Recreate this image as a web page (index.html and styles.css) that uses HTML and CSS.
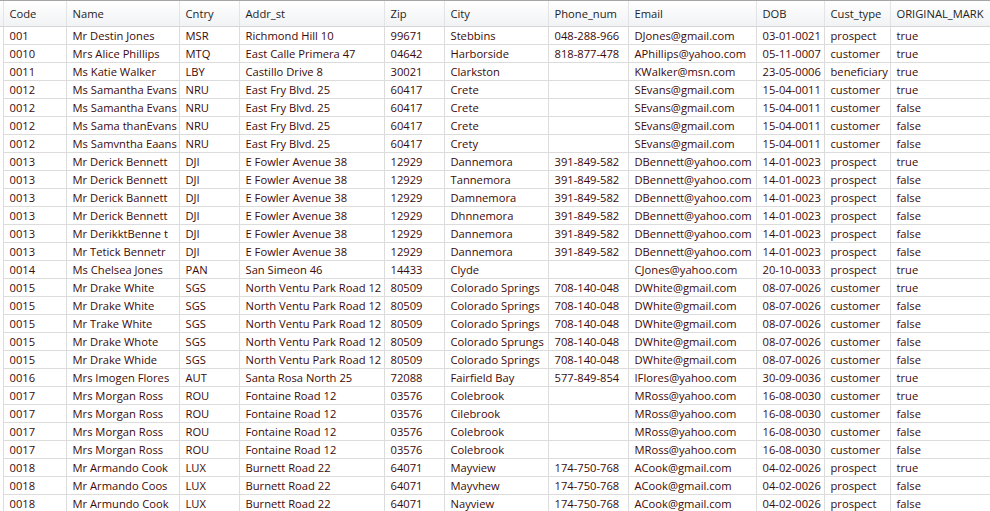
FILE: index.html
```html
<!DOCTYPE html>
<html>
<head>
<meta charset="utf-8">
<link rel="stylesheet" href="styles.css">
</head>
<body>
<div class="grid">
<table class="tbl">
<colgroup>
<col class="c-gut"><col class="c-code"><col class="c-name"><col class="c-cntry"><col class="c-addr"><col class="c-zip"><col class="c-city"><col class="c-phone"><col class="c-email"><col class="c-dob"><col class="c-type"><col class="c-mark">
</colgroup>
<thead>
<tr><th class="gut"></th><th>Code</th><th>Name</th><th>Cntry</th><th>Addr_st</th><th>Zip</th><th>City</th><th>Phone_num</th><th>Email</th><th>DOB</th><th>Cust_type</th><th>ORIGINAL_MARK</th></tr>
</thead>
<tbody>
<tr><td class="gut"></td><td>001</td><td>Mr Destin Jones</td><td>MSR</td><td>Richmond Hill 10</td><td>99671</td><td>Stebbins</td><td>048-288-966</td><td>DJones@gmail.com</td><td>03-01-0021</td><td>prospect</td><td>true</td></tr>
<tr><td class="gut"></td><td>0010</td><td>Mrs Alice Phillips</td><td>MTQ</td><td>East Calle Primera 47</td><td>04642</td><td>Harborside</td><td>818-877-478</td><td>APhillips@yahoo.com</td><td>05-11-0007</td><td>customer</td><td>true</td></tr>
<tr><td class="gut"></td><td>0011</td><td>Ms Katie Walker</td><td>LBY</td><td>Castillo Drive 8</td><td>30021</td><td>Clarkston</td><td></td><td>KWalker@msn.com</td><td>23-05-0006</td><td>beneficiary</td><td>true</td></tr>
<tr><td class="gut"></td><td>0012</td><td>Ms Samantha Evans</td><td>NRU</td><td>East Fry Blvd. 25</td><td>60417</td><td>Crete</td><td></td><td>SEvans@gmail.com</td><td>15-04-0011</td><td>customer</td><td>true</td></tr>
<tr><td class="gut"></td><td>0012</td><td>Ms Samantha Evans</td><td>NRU</td><td>East Fry Blvd. 25</td><td>60417</td><td>Crete</td><td></td><td>SEvans@gmail.com</td><td>15-04-0011</td><td>customer</td><td>false</td></tr>
<tr><td class="gut"></td><td>0012</td><td>Ms Sama thanEvans</td><td>NRU</td><td>East Fry Blvd. 25</td><td>60417</td><td>Crete</td><td></td><td>SEvans@gmail.com</td><td>15-04-0011</td><td>customer</td><td>false</td></tr>
<tr><td class="gut"></td><td>0012</td><td>Ms Samvntha Eaans</td><td>NRU</td><td>East Fry Blvd. 25</td><td>60417</td><td>Crety</td><td></td><td>SEvans@gmail.com</td><td>15-04-0011</td><td>customer</td><td>false</td></tr>
<tr><td class="gut"></td><td>0013</td><td>Mr Derick Bennett</td><td>DJI</td><td>E Fowler Avenue 38</td><td>12929</td><td>Dannemora</td><td>391-849-582</td><td>DBennett@yahoo.com</td><td>14-01-0023</td><td>prospect</td><td>true</td></tr>
<tr><td class="gut"></td><td>0013</td><td>Mr Derick Bennett</td><td>DJI</td><td>E Fowler Avenue 38</td><td>12929</td><td>Tannemora</td><td>391-849-582</td><td>DBennett@yahoo.com</td><td>14-01-0023</td><td>prospect</td><td>false</td></tr>
<tr><td class="gut"></td><td>0013</td><td>Mr Derick Bannett</td><td>DJI</td><td>E Fowler Avenue 38</td><td>12929</td><td>Damnemora</td><td>391-849-582</td><td>DBennett@yahoo.com</td><td>14-01-0023</td><td>prospect</td><td>false</td></tr>
<tr><td class="gut"></td><td>0013</td><td>Mr Derick Bennett</td><td>DJI</td><td>E Fowler Avenue 38</td><td>12929</td><td>Dhnnemora</td><td>391-849-582</td><td>DBennett@yahoo.com</td><td>14-01-0023</td><td>prospect</td><td>false</td></tr>
<tr><td class="gut"></td><td>0013</td><td>Mr DerikktBenne t</td><td>DJI</td><td>E Fowler Avenue 38</td><td>12929</td><td>Dannemora</td><td>391-849-582</td><td>DBennett@yahoo.com</td><td>14-01-0023</td><td>prospect</td><td>false</td></tr>
<tr><td class="gut"></td><td>0013</td><td>Mr Tetick Bennetr</td><td>DJI</td><td>E Fowler Avenue 38</td><td>12929</td><td>Dannemora</td><td>391-849-582</td><td>DBennett@yahoo.com</td><td>14-01-0023</td><td>prospect</td><td>false</td></tr>
<tr><td class="gut"></td><td>0014</td><td>Ms Chelsea Jones</td><td>PAN</td><td>San Simeon 46</td><td>14433</td><td>Clyde</td><td></td><td>CJones@yahoo.com</td><td>20-10-0033</td><td>prospect</td><td>true</td></tr>
<tr><td class="gut"></td><td>0015</td><td>Mr Drake White</td><td>SGS</td><td>North Ventu Park Road 12</td><td>80509</td><td>Colorado Springs</td><td>708-140-048</td><td>DWhite@gmail.com</td><td>08-07-0026</td><td>customer</td><td>true</td></tr>
<tr><td class="gut"></td><td>0015</td><td>Mr Drake White</td><td>SGS</td><td>North Ventu Park Road 12</td><td>80509</td><td>Colorado Springs</td><td>708-140-048</td><td>DWhite@gmail.com</td><td>08-07-0026</td><td>customer</td><td>false</td></tr>
<tr><td class="gut"></td><td>0015</td><td>Mr Trake White</td><td>SGS</td><td>North Ventu Park Road 12</td><td>80509</td><td>Colorado Springs</td><td>708-140-048</td><td>DWhite@gmail.com</td><td>08-07-0026</td><td>customer</td><td>false</td></tr>
<tr><td class="gut"></td><td>0015</td><td>Mr Drake Whote</td><td>SGS</td><td>North Ventu Park Road 12</td><td>80509</td><td>Colorado Sprungs</td><td>708-140-048</td><td>DWhite@gmail.com</td><td>08-07-0026</td><td>customer</td><td>false</td></tr>
<tr><td class="gut"></td><td>0015</td><td>Mr Drake Whide</td><td>SGS</td><td>North Ventu Park Road 12</td><td>80509</td><td>Colorado Springs</td><td>708-140-048</td><td>DWhite@gmail.com</td><td>08-07-0026</td><td>customer</td><td>false</td></tr>
<tr><td class="gut"></td><td>0016</td><td>Mrs Imogen Flores</td><td>AUT</td><td>Santa Rosa North 25</td><td>72088</td><td>Fairfield Bay</td><td>577-849-854</td><td>IFlores@yahoo.com</td><td>30-09-0036</td><td>customer</td><td>true</td></tr>
<tr><td class="gut"></td><td>0017</td><td>Mrs Morgan Ross</td><td>ROU</td><td>Fontaine Road 12</td><td>03576</td><td>Colebrook</td><td></td><td>MRoss@yahoo.com</td><td>16-08-0030</td><td>customer</td><td>true</td></tr>
<tr><td class="gut"></td><td>0017</td><td>Mrs Morgan Ross</td><td>ROU</td><td>Fontaine Road 12</td><td>03576</td><td>Cilebrook</td><td></td><td>MRoss@yahoo.com</td><td>16-08-0030</td><td>customer</td><td>false</td></tr>
<tr><td class="gut"></td><td>0017</td><td>Mrs Morgan Ross</td><td>ROU</td><td>Fontaine Road 12</td><td>03576</td><td>Colebrook</td><td></td><td>MRoss@yahoo.com</td><td>16-08-0030</td><td>customer</td><td>false</td></tr>
<tr><td class="gut"></td><td>0017</td><td>Mrs Morgan Ross</td><td>ROU</td><td>Fontaine Road 12</td><td>03576</td><td>Colebrook</td><td></td><td>MRoss@yahoo.com</td><td>16-08-0030</td><td>customer</td><td>false</td></tr>
<tr><td class="gut"></td><td>0018</td><td>Mr Armando Cook</td><td>LUX</td><td>Burnett Road 22</td><td>64071</td><td>Mayview</td><td>174-750-768</td><td>ACook@gmail.com</td><td>04-02-0026</td><td>prospect</td><td>true</td></tr>
<tr><td class="gut"></td><td>0018</td><td>Mr Armando Coos</td><td>LUX</td><td>Burnett Road 22</td><td>64071</td><td>Mayvhew</td><td>174-750-768</td><td>ACook@gmail.com</td><td>04-02-0026</td><td>prospect</td><td>false</td></tr>
<tr><td class="gut"></td><td>0018</td><td>Mr Armundo Cook</td><td>LUX</td><td>Burnett Road 22</td><td>64071</td><td>Nayview</td><td>174-750-768</td><td>ACook@gmail.com</td><td>04-02-0026</td><td>prospect</td><td>false</td></tr>
</tbody>
</table>
</div>
</body>
</html>
```
FILE: styles.css
```css
html, body {
  margin: 0;
  padding: 0;
  background: #ffffff;
}
.grid {
  width: 990px;
  height: 511px;
  overflow: hidden;
  border-top: 1px solid #a5a5a5;
  box-sizing: border-box;
}
.tbl {
  border-collapse: collapse;
  table-layout: fixed;
  width: 1000px;
  font-family: "Open Sans", "Noto Sans", sans-serif;
  font-size: 11.2px;
}
.c-gut { width: 3px; }
.c-code { width: 63px; }
.c-name { width: 113px; }
.c-cntry { width: 60px; }
.c-addr { width: 145px; }
.c-zip { width: 60px; }
.c-city { width: 104px; }
.c-phone { width: 80px; }
.c-email { width: 128px; }
.c-dob { width: 68px; }
.c-type { width: 66px; }
.c-mark { width: 113px; }
.tbl th {
  height: 25px;
  padding: 1px 0 0 6px;
  text-align: left;
  font-weight: normal;
  color: #1e1e1e;
  background: linear-gradient(#ffffff, #f1f2f4);
  border-left: 1px solid #e3e4e6;
  border-bottom: 1px solid #d5d5d5;
  white-space: nowrap;
  overflow: hidden;
  box-sizing: border-box;
}
.tbl td {
  height: 18px;
  padding: 1px 0 0 6px;
  color: #3b0a0a;
  border-left: 1px solid #dcdcdc;
  border-bottom: 1px solid #dcdcdc;
  white-space: nowrap;
  overflow: hidden;
  box-sizing: border-box;
  line-height: 16px;
}
.tbl .gut {
  padding: 0;
  border-left: none;
}
.tbl td.gut {
  border-bottom: none;
}
```
